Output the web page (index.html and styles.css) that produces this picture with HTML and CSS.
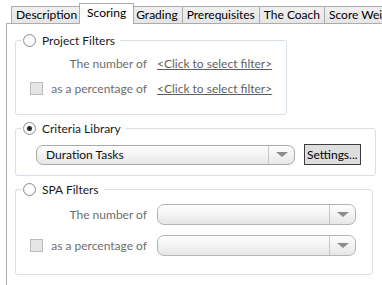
FILE: index.html
```html
<!DOCTYPE html>
<html lang="en">
<head>
    <meta charset="UTF-8">
    <meta name="viewport" content="width=device-width, initial-scale=1.0">
    <title>Scoring</title>
    <link rel="stylesheet" href="styles.css">
</head>
<body>

    <div class="tabs">
        <div class="tab">Description</div>
        <div class="tab selected">Scoring</div>
        <div class="tab">Grading</div>
        <div class="tab">Prerequisites</div>
        <div class="tab">The Coach</div>
        <div class="tab">Score Weighting</div>
    </div>

    <div class="panel">
        <!-- Project filters -->
        <fieldset class="group narrow">
            <legend><span class="radio"></span>Project Filters</legend>
            <div class="rows">
                <div class="label">The number of</div>
                <a class="link">&lt;Click to select filter&gt;</a>
                <div class="label"><span class="check"></span>as a percentage of</div>
                <a class="link">&lt;Click to select filter&gt;</a>
            </div>
        </fieldset>

        <!-- Criteria library -->
        <fieldset class="group library">
            <legend><span class="radio checked"></span>Criteria Library</legend>
            <div class="library-row">
                <div class="combo wide">
                    <span class="combo-text">Duration Tasks</span>
                    <span class="combo-btn"><span class="arrow"></span></span>
                </div>
                <button class="btn">Settings...</button>
            </div>
        </fieldset>

        <!-- SPA filters -->
        <fieldset class="group spa">
            <legend><span class="radio"></span>SPA Filters</legend>
            <div class="rows">
                <div class="label">The number of</div>
                <div class="combo">
                    <span class="combo-text"></span>
                    <span class="combo-btn"><span class="arrow"></span></span>
                </div>
                <div class="label"><span class="check"></span>as a percentage of</div>
                <div class="combo">
                    <span class="combo-text"></span>
                    <span class="combo-btn"><span class="arrow"></span></span>
                </div>
            </div>
        </fieldset>
    </div>

</body>
</html>
```

FILE: styles.css
```css
body {
    font-family: Lato, "Noto Sans", sans-serif;
    font-size: 12px;
    color: #000;
    background-color: #fff;
    margin: 0;
    padding: 0;
    overflow: hidden;
    height: 285px;
}

.tabs {
    display: flex;
    align-items: flex-end;
    height: 20px;
    margin: 3px 0 0 11px;
    white-space: nowrap;
}

.tab {
    height: 16px;
    line-height: 16px;
    padding: 0 4px;
    border: 1px solid #acacac;
    border-bottom: none;
    margin-left: -1px;
    background: linear-gradient(#f0f0f0, #e5e5e5);
}

.tab:first-child {
    margin-left: 0;
}

.tab.selected {
    position: relative;
    z-index: 1;
    height: 20px;
    line-height: 18px;
    margin: 0 -2px -1px -3px;
    padding: 0 7px;
    background: #fff;
}

.panel {
    width: 420px;
    height: 300px;
    margin-left: 6px;
    border: 1px solid #acacac;
    padding: 8px 0 0 8px;
    box-sizing: border-box;
}

.group {
    border: 1px solid #d5dfe5;
    border-radius: 3px;
    margin: 0 0 5px 0;
    padding: 0 14px;
}

.group.narrow {
    width: 272px;
    box-sizing: border-box;
    padding-bottom: 16px;
}

.group.library,
.group.spa {
    width: 358px;
    box-sizing: border-box;
}

.group legend {
    display: flex;
    align-items: center;
    height: 16px;
    padding: 0 5px 0 1px;
    margin-left: -8px;
    color: #1a1a1a;
}

.radio {
    width: 11px;
    height: 11px;
    border: 1px solid #8e8f8f;
    border-radius: 50%;
    margin-right: 6px;
    background: radial-gradient(circle, #fff 40%, #ececec);
}

.radio.checked {
    background: radial-gradient(circle, #1c1c1c 0, #2c2c2c 2px, #f4f4f4 3px, #fff 4px, #e8e8e8);
}

.rows {
    display: grid;
    grid-template-columns: 117px auto;
    column-gap: 10px;
    row-gap: 5px;
    align-items: center;
    margin-top: 5px;
}

.label {
    display: flex;
    align-items: center;
    justify-content: flex-end;
    height: 20px;
    color: #6d6d6d;
    white-space: nowrap;
}

.label .check {
    margin-right: auto;
}

.check {
    width: 11px;
    height: 11px;
    border: 1px solid #bcbcbc;
    background: #e6e6e6;
}

.link {
    color: #5f5f5f;
    text-decoration: underline;
    white-space: nowrap;
    cursor: pointer;
}

.library-row {
    display: flex;
    align-items: center;
    gap: 9px;
    margin: 8px 0 10px 6px;
}

.combo {
    display: flex;
    width: 199px;
    height: 20px;
    box-sizing: border-box;
    border: 1px solid #b4b4b4;
    border-radius: 7px;
    background: linear-gradient(#fefefe, #f3f3f3 50%, #e6e6e6);
}

.combo.wide {
    width: 259px;
    border-color: #a9a9a9;
}

.combo-text {
    flex: 1;
    padding-left: 9px;
    line-height: 18px;
    color: #111;
}

.combo-btn {
    display: flex;
    align-items: center;
    justify-content: center;
    width: 25px;
    border-left: 1px solid #c8c8c8;
}

.arrow {
    width: 0;
    height: 0;
    border-left: 6px solid transparent;
    border-right: 6px solid transparent;
    border-top: 5px solid #8c8c8c;
}

.spa .rows {
    row-gap: 10px;
    margin: 7px 0 18px;
}

.spa .combo {
    height: 21px;
}

.btn {
    font-family: inherit;
    font-size: 12px;
    height: 21px;
    padding: 0 2px;
    border: 1px solid #3c3c3c;
    background: #dedede;
    color: #000;
    cursor: pointer;
}
```
